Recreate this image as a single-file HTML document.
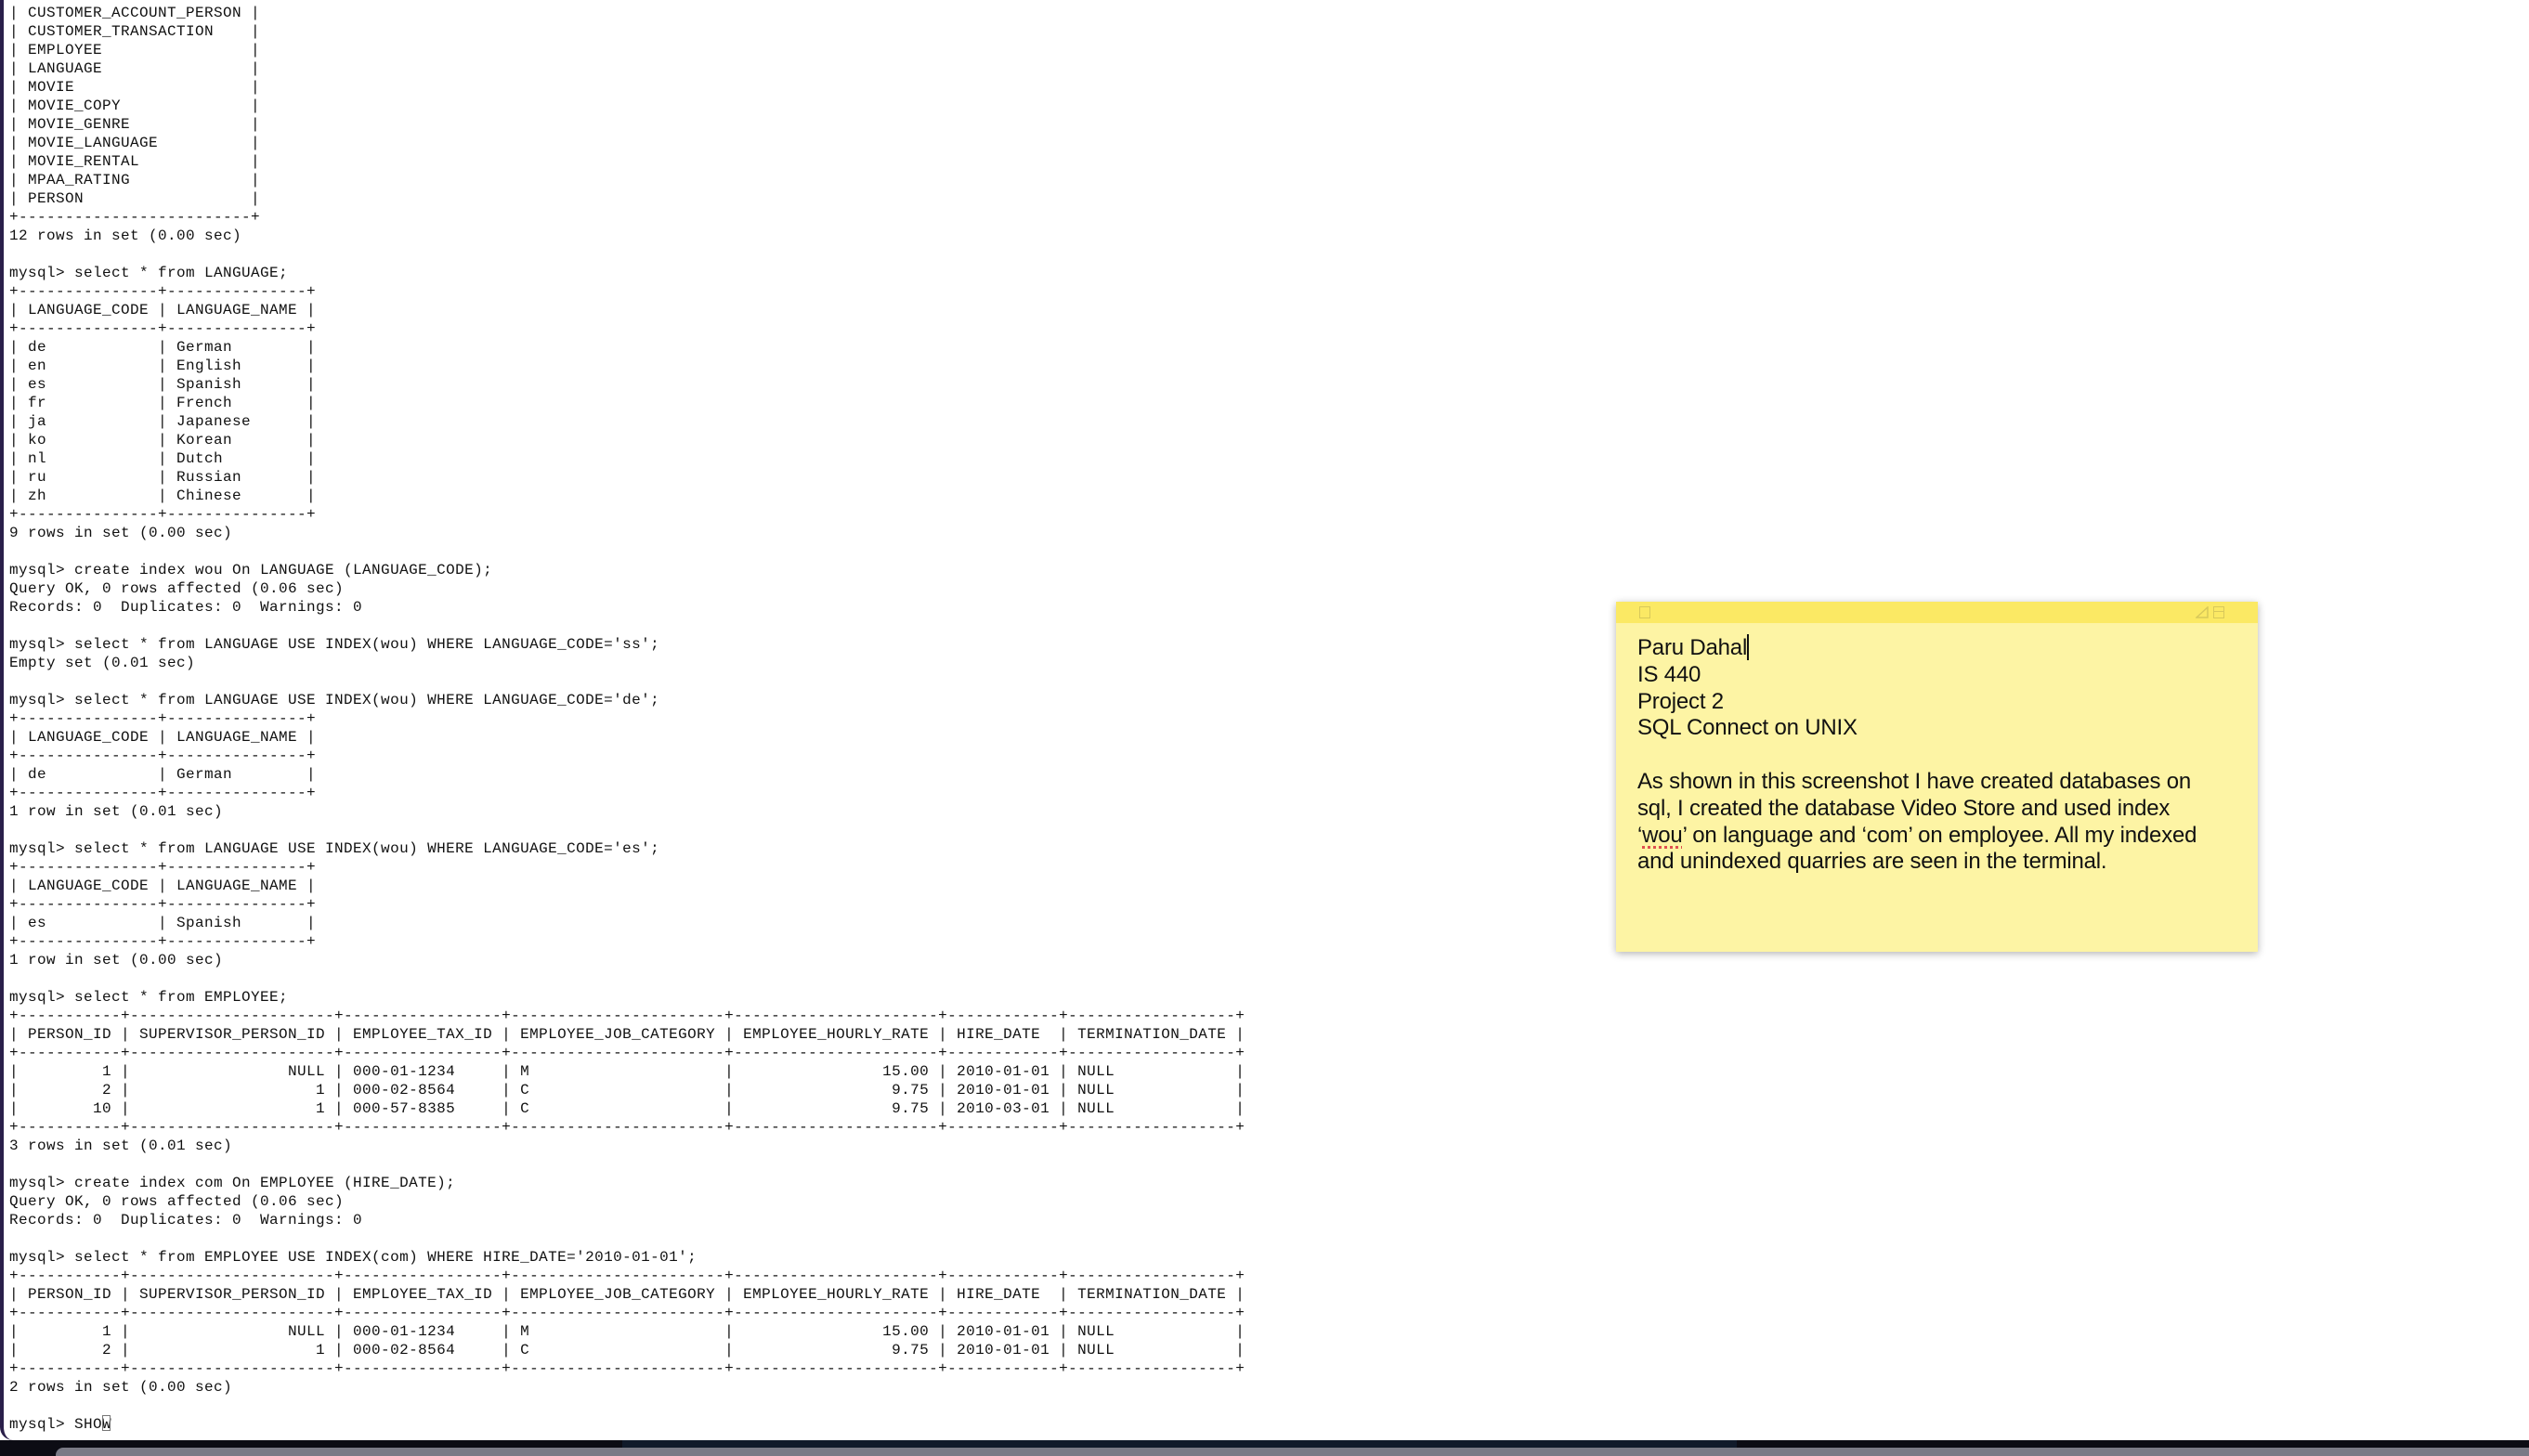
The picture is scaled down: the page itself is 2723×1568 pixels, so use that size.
<!DOCTYPE html>
<html><head><meta charset="utf-8"><style>
html,body{margin:0;padding:0}
body{width:2723px;height:1568px;background:#fff;position:relative;overflow:hidden}
#term{position:absolute;left:0;top:0;width:2723px;height:1551px;background:#fff;border-left:4px solid #2a1f4a;box-sizing:border-box;border-bottom-left-radius:14px;border-bottom-right-radius:14px}
pre{position:absolute;left:6px;top:4px;margin:0;font-family:"Liberation Mono",monospace;font-size:16px;letter-spacing:0.4px;line-height:20px;color:#111}
#bot{position:absolute;left:0;top:1551px;width:2723px;height:17px;background:#0c0c14}
#bot .g{position:absolute;left:60px;top:8px;width:2663px;height:9px;background:#7a7a86;border-top-left-radius:8px}
#bot .d{position:absolute;left:670px;top:0;width:1200px;height:8px;background:#111a2a}
.cur{display:inline-block;width:9px;height:17px;border:1.5px solid #777;box-sizing:border-box;vertical-align:-3px;margin-left:-10px}
#note{position:absolute;left:1740px;top:648px;width:691px;height:377px;background:#fdf4a4;box-shadow:0 2px 8px rgba(0,0,0,.3)}
#note .bar{height:23px;background:#fbe964}
#note .t{position:absolute;left:23px;top:35px;font-family:"Liberation Sans",sans-serif;font-size:24px;line-height:28.8px;color:#111;letter-spacing:-0.2px}
.sq{position:absolute;top:5px;width:12px;height:13px;border:1.5px solid #d8c95a;box-sizing:border-box}
.sp{text-decoration:underline dotted #e05050 3px;text-underline-offset:4px}
</style></head><body>
<div id="term"><pre>| CUSTOMER_ACCOUNT_PERSON |
| CUSTOMER_TRANSACTION    |
| EMPLOYEE                |
| LANGUAGE                |
| MOVIE                   |
| MOVIE_COPY              |
| MOVIE_GENRE             |
| MOVIE_LANGUAGE          |
| MOVIE_RENTAL            |
| MPAA_RATING             |
| PERSON                  |
+-------------------------+
12 rows in set (0.00 sec)

mysql&gt; select * from LANGUAGE;
+---------------+---------------+
| LANGUAGE_CODE | LANGUAGE_NAME |
+---------------+---------------+
| de            | German        |
| en            | English       |
| es            | Spanish       |
| fr            | French        |
| ja            | Japanese      |
| ko            | Korean        |
| nl            | Dutch         |
| ru            | Russian       |
| zh            | Chinese       |
+---------------+---------------+
9 rows in set (0.00 sec)

mysql&gt; create index wou On LANGUAGE (LANGUAGE_CODE);
Query OK, 0 rows affected (0.06 sec)
Records: 0  Duplicates: 0  Warnings: 0

mysql&gt; select * from LANGUAGE USE INDEX(wou) WHERE LANGUAGE_CODE='ss';
Empty set (0.01 sec)

mysql&gt; select * from LANGUAGE USE INDEX(wou) WHERE LANGUAGE_CODE='de';
+---------------+---------------+
| LANGUAGE_CODE | LANGUAGE_NAME |
+---------------+---------------+
| de            | German        |
+---------------+---------------+
1 row in set (0.01 sec)

mysql&gt; select * from LANGUAGE USE INDEX(wou) WHERE LANGUAGE_CODE='es';
+---------------+---------------+
| LANGUAGE_CODE | LANGUAGE_NAME |
+---------------+---------------+
| es            | Spanish       |
+---------------+---------------+
1 row in set (0.00 sec)

mysql&gt; select * from EMPLOYEE;
+-----------+----------------------+-----------------+-----------------------+----------------------+------------+------------------+
| PERSON_ID | SUPERVISOR_PERSON_ID | EMPLOYEE_TAX_ID | EMPLOYEE_JOB_CATEGORY | EMPLOYEE_HOURLY_RATE | HIRE_DATE  | TERMINATION_DATE |
+-----------+----------------------+-----------------+-----------------------+----------------------+------------+------------------+
|         1 |                 NULL | 000-01-1234     | M                     |                15.00 | 2010-01-01 | NULL             |
|         2 |                    1 | 000-02-8564     | C                     |                 9.75 | 2010-01-01 | NULL             |
|        10 |                    1 | 000-57-8385     | C                     |                 9.75 | 2010-03-01 | NULL             |
+-----------+----------------------+-----------------+-----------------------+----------------------+------------+------------------+
3 rows in set (0.01 sec)

mysql&gt; create index com On EMPLOYEE (HIRE_DATE);
Query OK, 0 rows affected (0.06 sec)
Records: 0  Duplicates: 0  Warnings: 0

mysql&gt; select * from EMPLOYEE USE INDEX(com) WHERE HIRE_DATE='2010-01-01';
+-----------+----------------------+-----------------+-----------------------+----------------------+------------+------------------+
| PERSON_ID | SUPERVISOR_PERSON_ID | EMPLOYEE_TAX_ID | EMPLOYEE_JOB_CATEGORY | EMPLOYEE_HOURLY_RATE | HIRE_DATE  | TERMINATION_DATE |
+-----------+----------------------+-----------------+-----------------------+----------------------+------------+------------------+
|         1 |                 NULL | 000-01-1234     | M                     |                15.00 | 2010-01-01 | NULL             |
|         2 |                    1 | 000-02-8564     | C                     |                 9.75 | 2010-01-01 | NULL             |
+-----------+----------------------+-----------------+-----------------------+----------------------+------------+------------------+
2 rows in set (0.00 sec)

mysql&gt; SHOW<span class="cur"></span></pre></div>
<div id="bot"><div class="d"></div><div class="g"></div></div>
<div id="note"><div class="bar"></div>
<div class="sq" style="left:25px"></div>
<svg style="position:absolute;left:624px;top:5px" width="14" height="13"><path d="M1 12 L13 1 L13 12 Z" fill="none" stroke="#d8c95a" stroke-width="1.5"/></svg>
<div class="sq" style="left:643px"><div style="border-top:1.5px solid #d8c95a;margin-top:4px"></div></div>
<div class="t">Paru Dahal<span style="display:inline-block;width:2px;height:28px;background:#111;vertical-align:-6px"></span><br>IS 440<br>Project 2<br>SQL Connect on UNIX<br><br>As shown in this screenshot I have created databases on<br>sql, I created the database Video Store and used index<br>‘<span class="sp">wou</span>’ on language and ‘com’ on employee. All my indexed<br>and unindexed quarries are seen in the terminal.</div>
</div>
</body></html>
